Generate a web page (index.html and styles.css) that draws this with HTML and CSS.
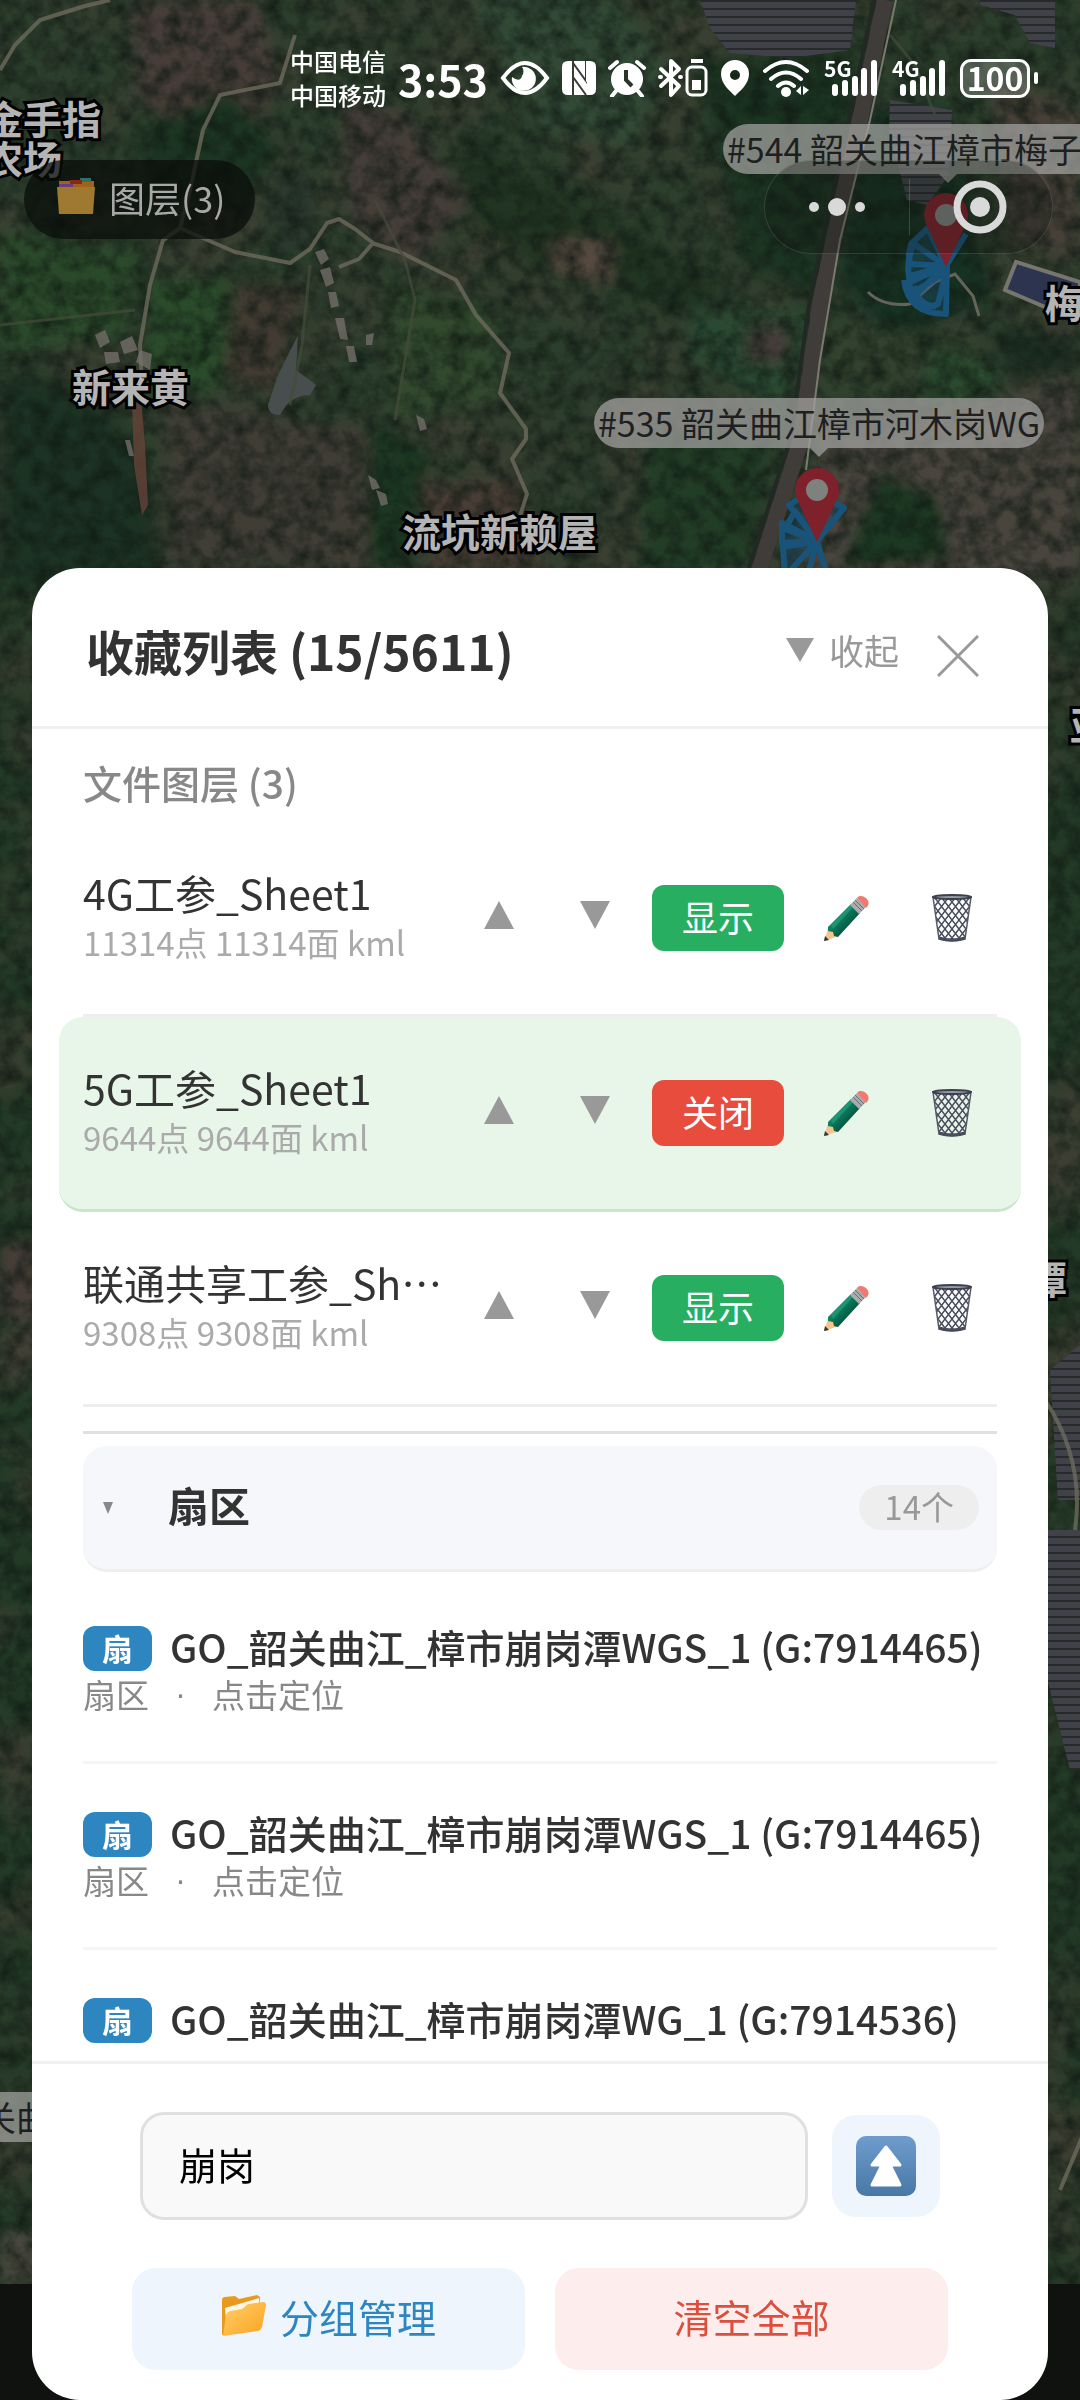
FILE: index.html
```html
<!DOCTYPE html>
<html lang="zh-CN">
<head>
    <meta charset="UTF-8">
    <meta name="viewport" content="width=device-width, initial-scale=1.0">
    <title>收藏列表</title>
    <link rel="stylesheet" href="styles.css">
</head>
<body>
    <!-- shared icons -->
    <svg class="defs" width="0" height="0" aria-hidden="true">
        <defs>
            <linearGradient id="pencilBody" x1="0" y1="0" x2="1" y2="1">
                <stop offset="0.3" stop-color="#10906c"/><stop offset="0.7" stop-color="#03513f"/>
            </linearGradient>
            <linearGradient id="folderFront" x1="0" y1="0" x2="1" y2="1">
                <stop offset="0" stop-color="#ffd06a"/><stop offset="1" stop-color="#fba31f"/>
            </linearGradient>
            <linearGradient id="upBg" x1="0" y1="0" x2="0" y2="1">
                <stop offset="0" stop-color="#6f9ccd"/><stop offset="1" stop-color="#4878a5"/>
            </linearGradient>
            <pattern id="mesh" width="7" height="9" patternUnits="userSpaceOnUse">
                <path d="M0 0L7 9M7 0L0 9" stroke="#4b4e5e" stroke-width="1.5"/>
            </pattern>
            <symbol id="pencil" viewBox="0 0 48 48">
                <path d="M2 47l5-15 10 10z" fill="#f6c48d"/>
                <path d="M2 47l1-5 4 4z" fill="#333"/>
                <path d="M6 33L29 10l9 9-22 24-4-1-1-4-5-1z" fill="url(#pencilBody)"/>
                <path d="M9 31L31 9l2 2-22 24z" fill="#2fa985" opacity=".5"/>
                <path d="M28 11l7-7 9 9-7 7z" fill="#a9abad"/>
                <path d="M31 8l9 9M33 6l9 9" stroke="#6d6f72" stroke-width="1"/>
                <path d="M35 4c4-6 17 3 9 10z" fill="#f07a70"/>
            </symbol>
            <symbol id="trash" viewBox="0 0 42 50">
                <path d="M2 4h38l-6 42q-13 4-26 0z" fill="url(#mesh)" stroke="#555866" stroke-width="1.5"/>
                <ellipse cx="21" cy="4" rx="19" ry="2" fill="#9698a5" stroke="#3d404d" stroke-width="2"/>
                <path d="M8 45q13 4 26 0" fill="none" stroke="#484b58" stroke-width="3"/>
            </symbol>
            <symbol id="pin" viewBox="0 0 44 74">
                <path d="M22 0a22 22 0 0 1 20 31L22 74 2 31A22 22 0 0 1 22 0z" fill="#7e212b"/>
                <circle cx="22" cy="22" r="11" fill="#7f817e"/>
            </symbol>
            <symbol id="signal" viewBox="0 0 56 38">
                <path d="M11 28v6M21 24v10M31 20v14M40 12v22M50 4v30" stroke="#fff" stroke-width="6" stroke-linecap="round" fill="none"/>
            </symbol>
        </defs>
    </svg>

    <!-- satellite map -->
    <div class="map">
        <svg class="map-tiles" viewBox="0 0 1080 2400" preserveAspectRatio="xMidYMin slice" aria-hidden="true">
            <defs>
                <filter id="soft" x="-5%" y="-5%" width="110%" height="110%"><feGaussianBlur stdDeviation="7"/></filter>
                <filter id="noise" x="0" y="0" width="100%" height="100%" color-interpolation-filters="sRGB">
                    <feTurbulence type="fractalNoise" baseFrequency="0.06" numOctaves="5" seed="7"/>
                    <feColorMatrix values="0 0 0 0 0.06  0 0 0 0 0.10  0 0 0 0 0.07  1.5 0 0 0 -0.5"/>
                </filter>
                <filter id="earth" x="0" y="0" width="100%" height="100%" color-interpolation-filters="sRGB">
                    <feTurbulence type="fractalNoise" baseFrequency="0.01" numOctaves="4" seed="21"/>
                    <feColorMatrix values="0 0 0 0 0.27  0 0 0 0 0.25  0 0 0 0 0.21  0 2 0 0 -0.85"/>
                </filter>
                <pattern id="solar" width="40" height="8" patternUnits="userSpaceOnUse">
                    <rect width="40" height="8" fill="#414249"/><rect width="40" height="2" fill="#262b2a"/>
                </pattern>
            </defs>
            <rect width="1080" height="2400" fill="#2c3e2c"/>
            <rect y="568" width="1080" height="1832" fill="#233a26"/>
            <rect width="1080" height="2400" filter="url(#earth)"/>
            <g filter="url(#soft)">
                <path d="M130 0h130l20 90-60 60-80-50z" fill="#463d38"/>
                <path d="M0 370l90 20 60 80 10 110H0z" fill="#1d3121"/>
                <path d="M140 130l90-40 50 60-40 50-90 0z" fill="#1e3623"/>
                <path d="M465 0h150l50 60-30 90-90-20z" fill="#334834"/>
                <path d="M460 130l100 60 160 90-10 40-170-50-70-50z" fill="#203424"/>
                <path d="M340 100l60 10 70 90-60 70-60-50z" fill="#443e38"/>
                <path d="M275 175l35 0 10 60-30 20-20-30z" fill="#29382f"/>
                <path d="M700 60l160-10-40 250-80-40z" fill="#1d3423"/>
                <path d="M870 110h80l40 190-100 40-50-60z" fill="#193220"/>
                <path d="M990 80l90 30v150l-70-20z" fill="#474039"/>
                <path d="M860 190l50 20-10 60-60-10z" fill="#173020"/>
                <path d="M690 310h120l-20 110-100-60z" fill="#2c4930"/>
                <path d="M750 325h40l-5 40-40-5z" fill="#443d39"/>
                <path d="M550 240l65 0-5 45-55-15z" fill="#57493f"/>
                <path d="M830 320l150 20-10 50-150 10z" fill="#33422f"/>
                <path d="M930 345l70 20-10 50-70-10z" fill="#2b4a2d"/>
                <path d="M820 440l260-60v200H800z" fill="#4a443c"/>
                <path d="M990 330l90 10v30l-70 5z" fill="#1c2f24"/>
                <path d="M150 280l80 0-10 110-75 0z" fill="#2b4b2b"/>
                <path d="M235 285l70 0-30 110-50-20z" fill="#433b32"/>
                <path d="M390 280l100 30 10 90-110 20z" fill="#304a2d"/>
                <path d="M370 420l60 30-20 120-40 0z" fill="#1e3924"/>
                <path d="M165 400l200 30 5 140-200-10z" fill="#3f3d34"/>
                <path d="M420 480l100 0 20 90-110 0z" fill="#493d34"/>
                <path d="M650 430l120 10-20 130-110 0z" fill="#223c26"/>
                <path d="M0 230l140 20-20 90-120 10z" fill="#2c4a2b"/>
                <path d="M880 470l60 30 10 60-110 10z" fill="#1d3822"/>
                <path d="M0 1240h40v80H0z" fill="#463d38"/>
                <path d="M0 2230h40v54H0z" fill="#4a463c"/>
            </g>
            <rect width="1080" height="2400" filter="url(#noise)"/>
            <path d="M268 405l10-30 20-40-2 35 20 15-6 10q-20 0-30 20-12 0-12-10z" fill="#474e4d"/>
            <path d="M700 0h156l-6 50-60 8-60-5-20-25z" fill="url(#solar)"/>
            <path d="M980 0h75v48l-25-5-15-28-35-10zM890 100l62 10-3 65-22 30-20-5-18-70z" fill="url(#solar)"/>
            <path d="M1050 1370l30-25v155h-22zM1045 1530h35v240l-10 0-25-100z" fill="url(#solar)"/>
            <g fill="none" stroke="#6d6a5c" stroke-width="4" stroke-linejoin="round" opacity=".8">
                <path d="M110 0L85 6 40 20 15 45 0 70M295 35l-15 48-60 12-17 35-13 60-10 38-17 12-13 45-10 60 2 40"/>
                <path d="M180 228l55 24 55 11 20-14 17-26 12-4 16 10 18 14-14 16-20 8M372 243l28 9 56 28 20 35 33 38-9 40 26 36 0 10-14 20 15 35-8 25"/>
                <path d="M1045 1400q40 60 30 130M1060 2190l25-60"/>
            </g>
            <g fill="none" stroke="#454b39" stroke-width="3" opacity=".7">
                <path d="M375 200l30 60 10 40-20 120M310 265l-8 80-12 60M0 325l135-15M890 35l25 30 20 50"/>
            </g>
            <path d="M885 0l-24 115-40 183-20 142-45 140" fill="none" stroke="#403c3a" stroke-width="16"/>
            <path d="M874 0l-24 115-40 183-20 142-45 140" fill="none" stroke="#222824" stroke-width="4"/>
            <path d="M896 0l-26 120-30 120-20 120-14 110" fill="none" stroke="#7c7a70" stroke-width="2"/>
            <path d="M868 292q15 15 42 12l25-22 20-8 18 22 6 20" fill="none" stroke="#66645a" stroke-width="3"/>
            <path d="M1016 262l64 20v40l-75-32z" fill="#2d3450" stroke="#77766e" stroke-width="4"/>
            <g fill="#77716c" opacity=".75">
                <path d="M95 335l10-5 5 12-10 6zM120 342l12-6 6 14-14 4zM104 352l14 0 2 10-14 2zM140 350l12 4-2 16-14-8zM130 370l10 0 2 10-12-2z"/>
                <path d="M315 252l9-3 5 10-8 6zM320 270l10-3 4 16-8 4zM328 292l8 0 3 14-8 2zM335 318l9 0 4 22-8-1zM346 346l8 0 3 16-8 0zM366 335l8-2-2 12-6 0z"/>
                <path d="M368 475l8 5 4 8-8 2zM376 490l10 4 2 10-7 2zM416 415l8 4 3 10-7 2zM125 440l5 0 4 16-5 0z"/>
            </g>
            <path d="M132 400l8-15 5 60 3 60-6 10-8-50z" fill="#65433a" opacity=".8"/>
            <g fill="none" stroke="#1a537a" stroke-width="6" stroke-linejoin="round">
                <path fill="#1a537a" fill-opacity=".35" d="M946 266l20-32M946 266l-18-38-17 16q-4 14 0 20zM946 266l-32-22q-9 18-4 38zM946 266l-36 10q-2 16 4 20zM946 272l-32 20q8 20 24 12zM904 280q4 34 42 34l1-48M914 286q4 20 22 20"/>
                <path fill="#1a537a" fill-opacity=".35" d="M817 541l-28-36 16-10 12-3 27 16zM817 541l-32-12 10-18zM817 541l-35 2 0-20zM817 541l-32 36-2-30zM817 541l-8 30M817 541l12 40"/>
            </g>
            <rect y="2284" width="1080" height="116" fill="#101210"/>
        </svg>
        <span class="place place-farm">金手指<br>农场</span>
        <span class="place place-huang">新来黄</span>
        <span class="place place-laiwu">流坑新赖屋</span>
        <span class="place place-mei">梅</span>
        <span class="place place-ya">亚</span>
        <span class="place place-tan">潭</span>
        <span class="site site-544">#544 韶关曲江樟市梅子坑WG</span>
        <span class="site site-535">#535 韶关曲江樟市河木岗WG</span>
        <span class="site site-edge">韶关曲江樟市</span>
        <svg class="pin pin-544" width="44" height="74"><use href="#pin"/></svg>
        <svg class="pin pin-535" width="44" height="74"><use href="#pin"/></svg>
    </div>

    <div class="app">
        <header class="top">
            <div class="status">
                <div class="carriers"><span>中国电信</span><span>中国移动</span></div>
                <span class="time">3:53</span>
                <svg width="50" height="36" viewBox="0 0 50 36"><path d="M3 18Q25-12 47 18 25 48 3 18z" fill="none" stroke="#fff" stroke-width="4"/><path d="M22 7a12 12 0 1 1-10 10q8 6 10-1 3-5 0-9z" fill="#fff"/></svg>
                <svg width="34" height="36" viewBox="0 0 34 36"><path d="M6 1h5v34H6q-6 0-6-6V7q0-6 6-6zM12 1h16q6 0 6 6v22q0 6-6 6H12z" fill="#fff"/><path d="M11 35V3l13 18V1M24 35L11 17" fill="none" stroke="#3b3934" stroke-width="2"/><path d="M24 1v20l3 5V1z" fill="#fff"/></svg>
                <svg width="38" height="38" viewBox="0 0 38 38"><circle cx="19" cy="20" r="16" fill="#fff"/><path d="M2 9l7-6M36 9l-7-6M8 32l-4 5M30 32l4 5" stroke="#fff" stroke-width="4" stroke-linecap="round"/><path d="M18 11v10l6 6" fill="none" stroke="#2b3529" stroke-width="4"/></svg>
                <svg width="50" height="40" viewBox="0 0 50 40"><path d="M3 11l18 17-8 9V3l8 8L3 28M2 19h1M22 19h1" fill="none" stroke="#fff" stroke-width="4" stroke-linejoin="round" stroke-linecap="round"/><rect x="29" y="9" width="19" height="28" rx="5" fill="none" stroke="#fff" stroke-width="3"/><path d="M33 3h12" stroke="#fff" stroke-width="4"/><rect x="34" y="22" width="9" height="10" fill="#fff"/></svg>
                <svg width="30" height="38" viewBox="0 0 30 38"><path fill-rule="evenodd" d="M15 1a14 14 0 0 1 14 14c0 10-9 17-14 22C10 32 1 25 1 15A14 14 0 0 1 15 1zm0 10a5 5 0 1 0 0 10 5 5 0 0 0 0-10z" fill="#fff"/></svg>
                <svg width="50" height="38" viewBox="0 0 50 38"><path d="M3 12q21-18 42 0M9 20q15-13 30 0M16 27q8-7 16 0" fill="none" stroke="#fff" stroke-width="4" stroke-linecap="round"/><circle cx="24" cy="33" r="5" fill="#fff"/><path d="M39 27v9l-5-4zM41 27v9l6-5z" fill="#fff"/></svg>
                <div class="cell"><small>5G</small><svg width="56" height="38"><use href="#signal"/></svg></div>
                <div class="cell"><small>4G</small><svg width="56" height="38"><use href="#signal"/></svg></div>
                <span class="battery">100</span>
            </div>
            <div class="controls">
                <button class="layers-btn" type="button">
                    <svg width="40" height="38" viewBox="0 0 40 38"><path d="M3 3h35v8H3z" fill="#a2621b"/><path d="M24 0h11v4H24z" fill="#2b7368"/><path d="M14 2h12v4H14z" fill="#842a15"/><path d="M3 6h14v5H3z" fill="#6b3c80"/><path d="M1 9h38l-2 27H3z" fill="#a07930"/></svg>
                    图层(3)
                </button>
                <div class="capsule">
                    <button type="button" aria-label="更多"><svg width="56" height="20" viewBox="0 0 56 20"><g fill="#d9d9d9"><circle cx="5" cy="10" r="5"/><circle cx="28" cy="10" r="9"/><circle cx="51" cy="10" r="5"/></g></svg></button>
                    <button type="button" aria-label="关闭小程序"><svg width="54" height="54" viewBox="0 0 54 54"><circle cx="27" cy="27" r="23" fill="none" stroke="#d9d9d9" stroke-width="7"/><circle cx="27" cy="27" r="10" fill="#d9d9d9"/></svg></button>
                </div>
            </div>
        </header>

        <main class="sheet">
            <div class="sheet-head">
                <h1>收藏列表 (15/5611)</h1>
                <button class="collapse" type="button"><svg width="28" height="24" viewBox="0 0 28 24"><path d="M0 0h28L14 24z" fill="#999"/></svg>收起</button>
                <button class="close" type="button" aria-label="关闭"><svg width="42" height="42" viewBox="0 0 42 42"><path d="M1 1l40 40M41 1L1 41" stroke="#999" stroke-width="3"/></svg></button>
            </div>

            <div class="list">
                <h2>文件图层 (3)</h2>
                <div class="layer">
                    <div class="layer-info"><div class="layer-name">4G工参_Sheet1</div><div class="layer-meta">11314点 11314面 kml</div></div>
                    <button class="tool move" type="button" aria-label="上移"><svg width="30" height="28" viewBox="0 0 30 28"><path d="M15 0l15 28H0z"/></svg></button>
                    <button class="tool move" type="button" aria-label="下移"><svg width="30" height="28" viewBox="0 0 30 28"><path d="M0 0h30L15 28z"/></svg></button>
                    <button class="toggle" type="button">显示</button>
                    <button class="tool" type="button" aria-label="编辑"><svg width="48" height="48"><use href="#pencil"/></svg></button>
                    <button class="tool" type="button" aria-label="删除"><svg width="42" height="50"><use href="#trash"/></svg></button>
                </div>
                <div class="layer active">
                    <div class="layer-info"><div class="layer-name">5G工参_Sheet1</div><div class="layer-meta">9644点 9644面 kml</div></div>
                    <button class="tool move" type="button" aria-label="上移"><svg width="30" height="28" viewBox="0 0 30 28"><path d="M15 0l15 28H0z"/></svg></button>
                    <button class="tool move" type="button" aria-label="下移"><svg width="30" height="28" viewBox="0 0 30 28"><path d="M0 0h30L15 28z"/></svg></button>
                    <button class="toggle off" type="button">关闭</button>
                    <button class="tool" type="button" aria-label="编辑"><svg width="48" height="48"><use href="#pencil"/></svg></button>
                    <button class="tool" type="button" aria-label="删除"><svg width="42" height="50"><use href="#trash"/></svg></button>
                </div>
                <div class="layer">
                    <div class="layer-info"><div class="layer-name">联通共享工参_Sheet1</div><div class="layer-meta">9308点 9308面 kml</div></div>
                    <button class="tool move" type="button" aria-label="上移"><svg width="30" height="28" viewBox="0 0 30 28"><path d="M15 0l15 28H0z"/></svg></button>
                    <button class="tool move" type="button" aria-label="下移"><svg width="30" height="28" viewBox="0 0 30 28"><path d="M0 0h30L15 28z"/></svg></button>
                    <button class="toggle" type="button">显示</button>
                    <button class="tool" type="button" aria-label="编辑"><svg width="48" height="48"><use href="#pencil"/></svg></button>
                    <button class="tool" type="button" aria-label="删除"><svg width="42" height="50"><use href="#trash"/></svg></button>
                </div>

                <hr>

                <div class="group">
                    <svg width="10" height="12" viewBox="0 0 10 12"><path d="M0 0h10L5 12z" fill="#888"/></svg>
                    <h3>扇区</h3>
                    <span class="count">14个</span>
                </div>

                <div class="item">
                    <div class="item-name"><span class="tag">扇</span>GO_韶关曲江_樟市崩岗潭WGS_1 (G:7914465)</div>
                    <div class="item-meta"><span>扇区</span><span class="dot">·</span><span>点击定位</span></div>
                </div>
                <div class="item">
                    <div class="item-name"><span class="tag">扇</span>GO_韶关曲江_樟市崩岗潭WGS_1 (G:7914465)</div>
                    <div class="item-meta"><span>扇区</span><span class="dot">·</span><span>点击定位</span></div>
                </div>
                <div class="item">
                    <div class="item-name"><span class="tag">扇</span>GO_韶关曲江_樟市崩岗潭WG_1 (G:7914536)</div>
                </div>
            </div>

            <footer class="sheet-foot">
                <div class="search">
                    <input type="text" value="崩岗" aria-label="搜索收藏">
                    <button class="to-top" type="button" aria-label="回到顶部">
                        <svg width="60" height="60" viewBox="0 0 60 60"><rect width="60" height="60" rx="10" fill="url(#upBg)"/><path d="M30 11L44 29H34L44 49H16L26 29H16z" fill="#fff" stroke="#fff" stroke-width="3" stroke-linejoin="round"/></svg>
                    </button>
                </div>
                <div class="actions">
                    <button class="action manage" type="button">
                        <svg width="46" height="42" viewBox="0 0 46 42"><path d="M1 5q0-3 3-3l10-1 4 3 18-4 3 2v30L1 40z" fill="#e99a1c"/><path d="M4 13L38 3l2 24L6 35z" fill="#fff6e6"/><path d="M5 20q1-3 4-4l12-2 6-5 15-2q3 0 3 3l-4 22q-1 3-4 4L2 41z" fill="url(#folderFront)"/></svg>
                        分组管理
                    </button>
                    <button class="action clear" type="button">清空全部</button>
                </div>
            </footer>
        </main>
    </div>
</body>
</html>
```

FILE: styles.css
```css
* { box-sizing: border-box; margin: 0; padding: 0; }
body {
    font-family: "Noto Sans CJK SC", "Noto Sans", sans-serif;
    background: #101210;
    color: #333;
}
button, input { font: inherit; border: none; }
button { background: none; cursor: pointer; }
svg { display: block; flex-shrink: 0; }
.defs { position: absolute; }

/* map */
.map { position: fixed; inset: 0; overflow: hidden; }
.map-tiles { width: 100%; height: 100%; }
.place, .site, .pin { position: absolute; white-space: nowrap; }
.place {
    font-size: 39px; line-height: 40px; font-weight: 700; color: #b4b4b4;
    -webkit-text-stroke: 6px #000; paint-order: stroke fill;
}
.place-farm { left: -16px; top: 97px; }
.place-huang { left: 72px; top: 365px; }
.place-laiwu { left: 402px; top: 510px; }
.place-mei { left: 1045px; top: 281px; }
.place-ya { left: 1070px; top: 703px; }
.place-tan { left: 1028px; top: 1257px; }
.site {
    height: 50px; padding: 0 4px; border-radius: 25px;
    background: rgba(160, 160, 158, 0.75); color: #1f1f1f;
    font-size: 34px; line-height: 50px;
}
.site::after {
    content: ""; position: absolute; top: 100%; left: 50%; margin-left: -9px;
    border: 9px solid transparent; border-top-color: rgba(160, 160, 158, 0.75); border-bottom: none;
}
.site-544 { left: 723px; top: 124px; }
.site-535 { left: 594px; top: 398px; }
.site-edge { left: -56px; top: 2092px; }
.pin-544 { left: 924px; top: 193px; }
.pin-535 { left: 795px; top: 468px; }

/* page shell */
.app {
    position: relative; height: 100vh; padding: 0 32px;
    display: flex; flex-direction: column;
}
.top { flex: none; padding: 42px 0 314px; }
.status {
    display: flex; align-items: center; justify-content: flex-end; gap: 12px;
    height: 72px; padding-right: 18px; margin-bottom: 46px; color: #fff;
}
.carriers { display: flex; flex-direction: column; font-size: 24px; line-height: 34px; font-weight: 500; }
.time { font-size: 43px; line-height: 60px; font-weight: 700; }
.cell { position: relative; }
.cell small { position: absolute; left: 0; top: -5px; font-size: 21px; line-height: 28px; font-weight: 700; }
.battery {
    position: relative; width: 70px; height: 39px; border: 3px solid #fff; border-radius: 11px;
    background: rgba(255, 255, 255, 0.2); font-size: 32px; line-height: 31px; font-weight: 700; text-align: center;
}
.battery::after {
    content: ""; position: absolute; right: -11px; top: 10px;
    width: 4px; height: 12px; border-radius: 2px; background: #fff;
}
.controls { display: flex; justify-content: space-between; align-items: flex-start; height: 94px; margin: 0 -5px 0 -8px; }
.layers-btn {
    display: flex; align-items: center; gap: 13px; height: 79px; padding: 0 30px 5px 32px;
    border-radius: 40px; background: rgba(10, 12, 10, 0.72); color: #a8a8a8; font-size: 36px;
}
.capsule {
    display: flex; width: 289px; height: 94px; border-radius: 47px;
    border: 1px solid rgba(255, 255, 255, 0.12); background: rgba(20, 26, 20, 0.3);
}
.capsule button { flex: 1; display: flex; align-items: center; justify-content: center; }
.capsule button + button { position: relative; }
.capsule button + button::before {
    content: ""; position: absolute; left: 0; top: 18px; bottom: 18px; width: 1px; background: rgba(255, 255, 255, 0.15);
}

/* bottom sheet */
.sheet {
    flex: 1; min-height: 0; display: flex; flex-direction: column;
    background: #fff; border-radius: 48px; overflow: hidden;
}
.sheet-head {
    flex: none; display: flex; align-items: center;
    height: 161px; padding: 6px 69px 0 54px; border-bottom: 3px solid #f0f0f0;
}
.sheet-head h1 { flex: 1; font-size: 48px; line-height: 60px; font-weight: 700; }
.collapse { display: flex; align-items: center; gap: 15px; font-size: 35px; line-height: 50px; color: #999; }
.close { margin-left: 38px; padding-top: 12px; }

.list { flex: 1; min-height: 0; overflow: hidden; padding: 0 51px; }
.list h2 { padding: 25px 0 12px; font-size: 39px; line-height: 56px; font-weight: 500; color: #888; }
.layer { display: flex; align-items: center; height: 195px; border-bottom: 3px solid #eee; }
.layer.active {
    margin: 0 -24px; padding: 0 24px; border-radius: 24px;
    background: #e8f5e9; border-bottom-color: #c8e6c9;
}
.layer-info { flex: 1; min-width: 0; padding-bottom: 4px; }
.layer-name { font-size: 41px; line-height: 52px; overflow: hidden; text-overflow: ellipsis; white-space: nowrap; }
.layer-meta { font-size: 33px; line-height: 48px; color: #aaa; }
.tool { width: 106px; display: flex; justify-content: center; fill: #999; }
.tool:last-child { margin-right: -8px; }
.move { width: 96px; padding-bottom: 6px; }
.toggle {
    width: 132px; height: 66px; margin: 0 9px; padding-bottom: 5px; border-radius: 12px;
    background: #27ae60; color: #fff; font-size: 36px; line-height: 60px;
}
.toggle.off { background: #e74c3c; }

.list hr { height: 3px; margin: 24px 0 12px; border: none; background: #e0e0e0; }
.group {
    display: flex; align-items: center; height: 126px; margin-bottom: 6px; padding: 0 18px 0 20px;
    background: #f5f7fb; border-bottom: 3px solid #eee; border-radius: 24px;
}
.group h3 { flex: 1; margin-left: 55px; padding-bottom: 8px; font-size: 41px; line-height: 56px; font-weight: 700; }
.count { height: 45px; padding: 0 25px; border-radius: 24px; background: #eee; color: #999; font-size: 33px; line-height: 42px; }

.item { height: 186px; padding-top: 42px; border-bottom: 3px solid #f5f5f5; }
.item-name {
    display: flex; align-items: center; height: 52px;
    font-size: 39px; line-height: 48px; font-weight: 500; white-space: nowrap;
}
.tag {
    width: 69px; height: 45px; margin: 5px 18px 0 0; border-radius: 12px; background: #2e86c1; color: #fff;
    font-size: 31px; line-height: 43px; font-weight: 700; text-align: center;
}
.item-meta { display: flex; gap: 26px; font-size: 33px; line-height: 44px; color: #888; }
.dot { font-family: "Liberation Sans", sans-serif; }

.sheet-foot { flex: none; padding: 48px 16px 30px; border-top: 3px solid #f0f0f0; }
.search { display: flex; align-items: center; gap: 24px; max-width: 800px; margin: 0 auto 48px; }
.search input {
    flex: 1; min-width: 0; height: 108px; padding: 0 36px 6px; border: 3px solid #e0e0e0; border-radius: 24px;
    background: #f9f9f9; color: #000; font-size: 38px;
}
.to-top {
    display: flex; align-items: center; justify-content: center;
    width: 108px; height: 102px; border-radius: 24px; background: #eff5fc;
}
.actions { display: flex; gap: 30px; max-width: 816px; margin: 0 auto; }
.action {
    flex: 1; display: flex; align-items: center; justify-content: center; gap: 13px;
    height: 102px; padding-bottom: 6px; border-radius: 24px; font-size: 39px;
}
.manage { background: #eff5fc; color: #2e86c1; }
.clear { background: #fdeeed; color: #dc4f3f; }
```
